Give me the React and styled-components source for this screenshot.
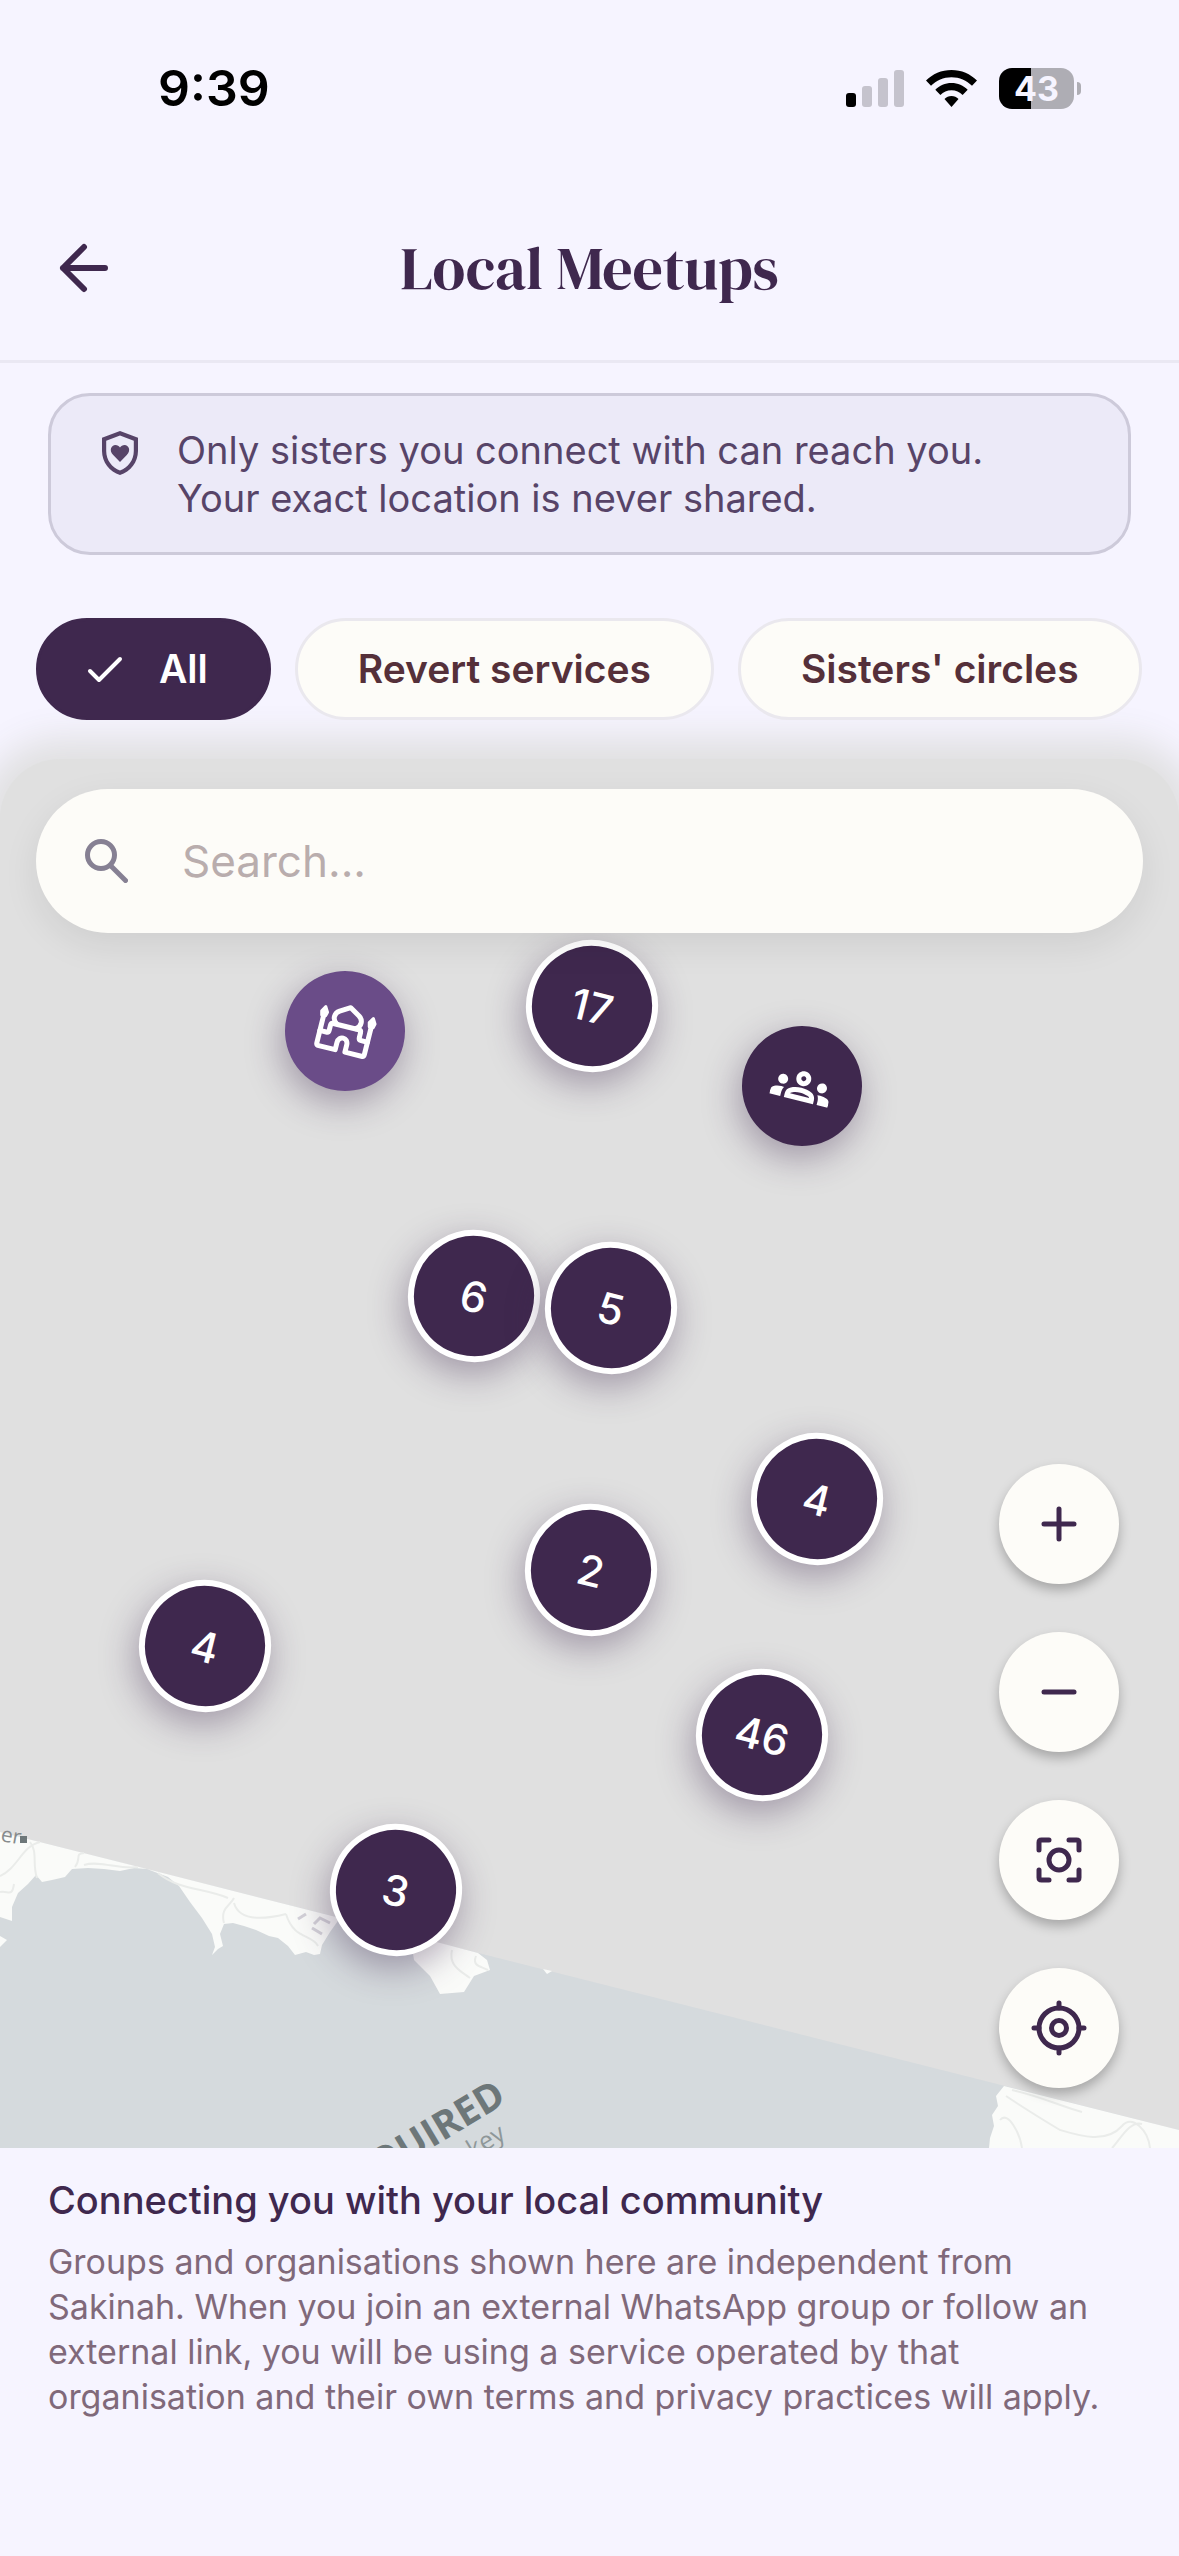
import React, { useState } from "react";
import styled, { createGlobalStyle, css } from "styled-components";
import { MdOutlineGroups } from "react-icons/md";

const GlobalStyle = createGlobalStyle`
  * {
    box-sizing: border-box;
  }

  body {
    margin: 0;
    background: #f6f4ff;
    font-family: Inter, "Liberation Sans", sans-serif;
    color: #3f284e;
  }

  button, input {
    font-family: inherit;
  }
`;

const Screen = styled.div`
  display: flex;
  flex-direction: column;
  min-height: 100vh;
  overflow: hidden;
`;

const StatusBar = styled.div`
  display: flex;
  align-items: center;
  justify-content: space-between;
  height: 176px;
  padding: 0 98px 0 158px;
  color: #000;
`;

const Clock = styled.span`
  font-size: 50px;
  font-weight: 600;
  line-height: 60px;
`;

const StatusIcons = styled.div`
  display: flex;
  align-items: center;
  gap: 22px;
`;

const Battery = styled.div`
  display: flex;
  align-items: center;
  gap: 3px;
`;

const BatteryLevel = styled.div`
  display: flex;
  align-items: center;
  justify-content: center;
  width: 75px;
  height: 41px;
  border-radius: 13px;
  background: linear-gradient(to right, #000 43%, #aeadb4 43%);
  color: #f6f4ff;
  font-size: 34px;
  font-weight: 700;
  line-height: 41px;
`;

const BatteryTip = styled.div`
  width: 4px;
  height: 13px;
  border-radius: 0 4px 4px 0;
  background: #aeadb4;
`;

const Header = styled.header`
  display: grid;
  grid-template-columns: 96px 1fr 96px;
  align-items: center;
  height: 187px;
  padding: 0 36px;
  border-bottom: 3px solid #eae8f3;
`;

const BackButton = styled.button`
  display: flex;
  align-items: center;
  justify-content: center;
  width: 96px;
  height: 96px;
  padding: 0;
  border: 0;
  background: none;
  color: inherit;
`;

const Title = styled.h1`
  margin: 0;
  font-family: "DM Serif Display", "Liberation Serif", serif;
  font-size: 60px;
  font-weight: 400;
  line-height: 72px;
  text-align: center;
`;

const Notice = styled.section`
  display: flex;
  gap: 33px;
  margin: 30px 48px 63px;
  padding: 30px 45px;
  border: 3px solid #cdcada;
  border-radius: 42px;
  background: #eceaf8;
  color: #574468;
`;

const NoticeIcon = styled.div`
  display: flex;
  align-items: center;
  height: 54px;
`;

const NoticeText = styled.p`
  margin: 0;
  font-size: 38px;
  line-height: 48px;
`;

const Chips = styled.div`
  position: relative;
  z-index: 1;
  display: flex;
  gap: 24px;
  padding: 0 36px;
`;

const Chip = styled.button`
  display: flex;
  align-items: center;
  gap: 34px;
  flex-shrink: 0;
  height: 102px;
  padding: 0 60px;
  border: 3px solid #eae8ee;
  border-radius: 51px;
  background: #fdfcf8;
  color: #55303a;
  font-size: 39px;
  font-weight: 600;
  line-height: 48px;

  ${({ $active }) => $active && css`
    padding: 0 60px 0 48px;
    border-color: #3f284e;
    background: #3f284e;
    color: #fff;
  `}
`;

const Map = styled.main`
  position: relative;
  height: 1389px;
  margin-top: 39px;
  border-radius: 60px 60px 0 0;
  background: #e0e0e0;
  box-shadow: 0 0 36px 21px #e0e0e1;
`;

const MapTiles = styled.svg`
  position: absolute;
  left: 0;
  bottom: 0;
  width: 100%;
  height: 348px;
`;

const MapTop = styled.div`
  padding-top: 30px;
`;

const SearchBox = styled.label`
  position: relative;
  display: flex;
  align-items: center;
  gap: 54px;
  height: 144px;
  margin: 0 36px;
  padding: 0 48px;
  border-radius: 72px;
  background: #fdfcf8;
  box-shadow: 0 12px 36px rgba(0, 0, 0, 0.08);
  color: #868093;
`;

const SearchInput = styled.input`
  flex: 1;
  min-width: 0;
  padding: 0;
  border: 0;
  outline: 0;
  background: none;
  color: #3f284e;
  font-size: 44px;
  line-height: 60px;

  &::placeholder {
    color: #b9adad;
    opacity: 1;
  }
`;

const Marker = styled.button`
  position: absolute;
  left: ${({ $x }) => $x}px;
  top: ${({ $y }) => $y}px;
  display: flex;
  align-items: center;
  justify-content: center;
  width: 120px;
  height: 120px;
  padding: 0;
  border: 0;
  border-radius: 50%;
  background: ${({ $color }) => $color || "#3f284e"};
  box-shadow: 0 12px 36px rgba(63, 40, 78, 0.4);
  color: #fff;
  font-size: 42px;
  font-weight: 500;
  transform: translate(-50%, -50%) rotate(14deg);

  ${({ $cluster }) => $cluster && css`
    width: 132px;
    height: 132px;
    border: 6px solid #fff;
  `}
`;

const Controls = styled.div`
  position: absolute;
  right: 60px;
  bottom: 60px;
  display: flex;
  flex-direction: column;
  gap: 48px;
`;

const ControlButton = styled.button`
  display: flex;
  align-items: center;
  justify-content: center;
  width: 120px;
  height: 120px;
  padding: 0;
  border: 0;
  border-radius: 50%;
  background: #fdfcf8;
  box-shadow: 0 6px 12px rgba(0, 0, 0, 0.26);
  color: #3f284e;
`;

const Footer = styled.footer`
  position: relative;
  flex: 1;
  padding: 25px 48px;
  background: #f6f4ff;
`;

const FooterTitle = styled.h2`
  margin: 0 0 12px;
  font-size: 38px;
  font-weight: 500;
  line-height: 54px;
`;

const FooterText = styled.p`
  margin: 0;
  color: #80697a;
  font-size: 34px;
  line-height: 45px;
`;

const filters = ["All", "Revert services", "Sisters' circles"];

const clusters = [
  { count: 17, x: 592, y: 247 },
  { count: 6, x: 474, y: 537 },
  { count: 5, x: 611, y: 549 },
  { count: 4, x: 817, y: 740 },
  { count: 2, x: 591, y: 811 },
  { count: 4, x: 205, y: 887 },
  { count: 46, x: 762, y: 976 },
  { count: 3, x: 396, y: 1131 },
];

const Stroke = ({ size, children }) => (
  <svg
    width={size}
    height={size}
    viewBox="0 0 24 24"
    fill="none"
    stroke="currentColor"
    strokeWidth="2"
    strokeLinecap="round"
    strokeLinejoin="round"
    aria-hidden="true"
  >
    {children}
  </svg>
);

const SignalIcon = () => (
  <svg width="58" height="37" viewBox="0 0 58 37" aria-hidden="true">
    <rect x="0" y="23" width="10" height="14" rx="3" />
    <rect x="16" y="16" width="10" height="21" rx="3" fill="#c5c3cd" />
    <rect x="32" y="8" width="10" height="29" rx="3" fill="#c5c3cd" />
    <rect x="48" y="0" width="10" height="37" rx="3" fill="#c5c3cd" />
  </svg>
);

const WifiIcon = () => (
  <svg width="51" height="37" viewBox="0 0 51 37" aria-hidden="true">
    <path d="M25.5 0C35.5 0 44.5 4 51 10.6L46 15.8C40.7 10.6 33.5 7.3 25.5 7.3S10.3 10.6 5 15.8L0 10.6C6.5 4 15.5 0 25.5 0Z" />
    <path d="M25.5 13C31.8 13 37.5 15.5 41.7 19.7L36.6 24.9C33.7 22 29.8 20.2 25.5 20.2S17.3 22 14.4 24.9L9.3 19.7C13.5 15.5 19.2 13 25.5 13Z" />
    <path d="M25.5 26C28.2 26 30.7 27.1 32.5 28.9L25.5 37L18.5 28.9C20.3 27.1 22.8 26 25.5 26Z" />
  </svg>
);

const ShieldIcon = () => (
  <svg width="48" height="48" viewBox="0 0 24 24" fill="currentColor" aria-hidden="true">
    <path
      fillRule="evenodd"
      d="M12 1L21 4.4V11C21 16.6 17.2 21.5 12 23C6.8 21.5 3 16.6 3 11V4.4ZM12 3.3L5.1 5.9V11C5.1 15.5 8 19.4 12 20.8C16 19.4 18.9 15.5 18.9 11V5.9Z"
    />
    <path d="M12 16.5L8.6 13C6.3 10.6 7.7 8 9.7 8C10.7 8 11.5 8.5 12 9.3C12.5 8.5 13.3 8 14.3 8C16.3 8 17.7 10.6 15.4 13Z" />
  </svg>
);

const CheckIcon = () => (
  <svg
    width="38"
    height="38"
    viewBox="0 0 38 38"
    fill="none"
    stroke="currentColor"
    strokeWidth="4"
    strokeLinecap="round"
    strokeLinejoin="round"
    aria-hidden="true"
  >
    <path d="M3 21L12 30L33 9" />
  </svg>
);

const SearchIcon = () => (
  <svg
    width="44"
    height="44"
    viewBox="0 0 44 44"
    fill="none"
    stroke="currentColor"
    strokeWidth="5"
    strokeLinecap="round"
    aria-hidden="true"
  >
    <circle cx="17" cy="16" r="13.5" />
    <path d="M27.5 27.5L41.5 41.5" />
  </svg>
);

const MosqueIcon = () => (
  <svg
    width="60"
    height="60"
    viewBox="0 0 60 60"
    fill="none"
    stroke="currentColor"
    strokeWidth="5"
    strokeLinecap="round"
    strokeLinejoin="round"
    aria-hidden="true"
  >
    <path d="M5.5 18V48Q5.5 50.5 8 50.5H25V43C25 35.5 35 35.5 35 43V50.5H52Q54.5 50.5 54.5 48V18" />
    <path d="M5.5 35.5H12Q14.5 35.5 14.5 33V28Q14.5 25.5 17 25.5H43Q45.5 25.5 45.5 28V33Q45.5 35.5 48 35.5H54.5" />
    <path d="M20 25C14.5 21 15.5 15 20 12L30 6L40 12C44.5 15 45.5 21 40 25" />
    <path d="M5.5 11L8.5 16L7.5 20H3.5L2.5 16ZM54.5 11L57.5 16L56.5 20H52.5L51.5 16Z" fill="currentColor" strokeWidth="3" />
  </svg>
);

const Coastline = () => (
  <MapTiles viewBox="0 0 1179 348" preserveAspectRatio="xMinYMax slice" aria-hidden="true">
    <path d="M0 32L1179 330V348H0Z" fill="#d5dadd" />
    <g fill="#fafbf9">
      <path d="M0 32L147 69L134 68L120 71L104 69L88 68L72 69L65 77L52 80L42 82L36 75L28 84L18 93L12 107L12 121L0 117Z" />
      <path d="M147 69L340 118L330 132L322 145L320 154L314 155L306 152L295 155L288 146L278 138L269 136L256 130L244 126L233 123L224 124L220 134L223 146L218 149L212 155L215 147L212 134L202 118L190 102L179 86L168 77Z" />
      <path d="M0 136L7 140L0 147Z" />
      <path d="M410 135L478 153L487 160L490 170L474 176L464 192L440 194L430 176L414 160Z" />
      <path d="M543 169L552 171L547 174Z" />
      <path d="M1004 286L1179 330V348H989L990 338L994 326L992 315L998 306L996 296Z" />
    </g>
    <g fill="none" stroke="#eaecea" strokeWidth="2">
      <path d="M0 76C18 68 22 46 40 42M30 42C38 52 32 64 37 78M0 92C8 90 12 98 14 84M75 67C82 58 74 54 84 53M84 65C100 60 120 70 138 67" />
      <path d="M158 73C178 90 205 88 228 98M234 103C240 124 270 118 286 114M224 123C220 108 230 106 234 98M286 114C294 140 312 134 318 146" />
      <path d="M452 150C448 166 462 172 470 178M476 156C472 166 480 166 488 170" />
      <path d="M1006 296C1030 312 1040 318 1060 330C1080 336 1106 344 1122 326C1132 314 1148 330 1150 348M1012 290C1040 296 1060 306 1082 312M1000 320C1008 310 1020 334 1022 348M1112 348C1120 340 1130 320 1142 324" />
    </g>
    <g fill="none" stroke="#d3d1d8" strokeWidth="3">
      <path d="M298 119L306 114M314 124L320 118L330 123M312 128L322 134" />
    </g>
    <g fill="#6d7779" fontFamily="'Open Sans', 'Noto Sans', sans-serif">
      <text x="0" y="41" fontSize="21" fill="#878b8d" transform="rotate(10 0 41)">er</text>
      <rect x="20" y="36" width="7" height="7" />
      <text x="508" y="302" fontSize="39" fontWeight="700" textAnchor="end" transform="rotate(-31 508 302)">REQUIRED</text>
      <text x="507" y="338" fontSize="25" fill="#8e9799" textAnchor="end" transform="rotate(-31 507 338)">API key</text>
    </g>
  </MapTiles>
);

export default function App() {
  const [filter, setFilter] = useState("All");
  const [query, setQuery] = useState("");

  return (
    <Screen>
      <GlobalStyle />
      <StatusBar>
        <Clock>9:39</Clock>
        <StatusIcons>
          <SignalIcon />
          <WifiIcon />
          <Battery>
            <BatteryLevel>43</BatteryLevel>
            <BatteryTip />
          </Battery>
        </StatusIcons>
      </StatusBar>

      <Header>
        <BackButton aria-label="Back">
          <Stroke size={72}>
            <path d="M19 12H5M12 19L5 12L12 5" />
          </Stroke>
        </BackButton>
        <Title>Local Meetups</Title>
      </Header>

      <Notice>
        <NoticeIcon>
          <ShieldIcon />
        </NoticeIcon>
        <NoticeText>
          Only sisters you connect with can reach you.
          <br />
          Your exact location is never shared.
        </NoticeText>
      </Notice>

      <Chips>
        {filters.map((name) => (
          <Chip
            key={name}
            $active={filter === name}
            aria-pressed={filter === name}
            onClick={() => setFilter(name)}
          >
            {filter === name && <CheckIcon />}
            {name}
          </Chip>
        ))}
      </Chips>

      <Map>
        <Coastline />
        {clusters.map(({ count, x, y }) => (
          <Marker key={`${x}-${y}`} $cluster $x={x} $y={y}>
            {count}
          </Marker>
        ))}
        <Marker $x={345} $y={272} $color="#6a4c88" aria-label="Mosque">
          <MosqueIcon />
        </Marker>
        <Marker $x={802} $y={327} aria-label="Sisters' circle">
          <MdOutlineGroups size={60} />
        </Marker>
        <MapTop>
          <SearchBox>
            <SearchIcon />
            <SearchInput
              aria-label="Search"
              placeholder="Search..."
              value={query}
              onChange={(e) => setQuery(e.target.value)}
            />
          </SearchBox>
        </MapTop>
        <Controls>
          <ControlButton aria-label="Zoom in">
            <Stroke size={60}>
              <path d="M6 12H18M12 6V18" />
            </Stroke>
          </ControlButton>
          <ControlButton aria-label="Zoom out">
            <Stroke size={60}>
              <path d="M6 12H18" />
            </Stroke>
          </ControlButton>
          <ControlButton aria-label="Fit all">
            <Stroke size={60}>
              <circle cx="12" cy="12" r="4" />
              <path d="M4 8V5Q4 4 5 4H8M16 4H19Q20 4 20 5V8M20 16V19Q20 20 19 20H16M8 20H5Q4 20 4 19V16" />
            </Stroke>
          </ControlButton>
          <ControlButton aria-label="My location">
            <Stroke size={60}>
              <circle cx="12" cy="12" r="8" />
              <circle cx="12" cy="12" r="3" />
              <path d="M12 2V4M12 20V22M2 12H4M20 12H22" />
            </Stroke>
          </ControlButton>
        </Controls>
      </Map>

      <Footer>
        <FooterTitle>Connecting you with your local community</FooterTitle>
        <FooterText>
          Groups and organisations shown here are independent from Sakinah. When
          you join an external WhatsApp group or follow an external link, you
          will be using a service operated by that organisation and their own
          terms and privacy practices will apply.
        </FooterText>
      </Footer>
    </Screen>
  );
}
